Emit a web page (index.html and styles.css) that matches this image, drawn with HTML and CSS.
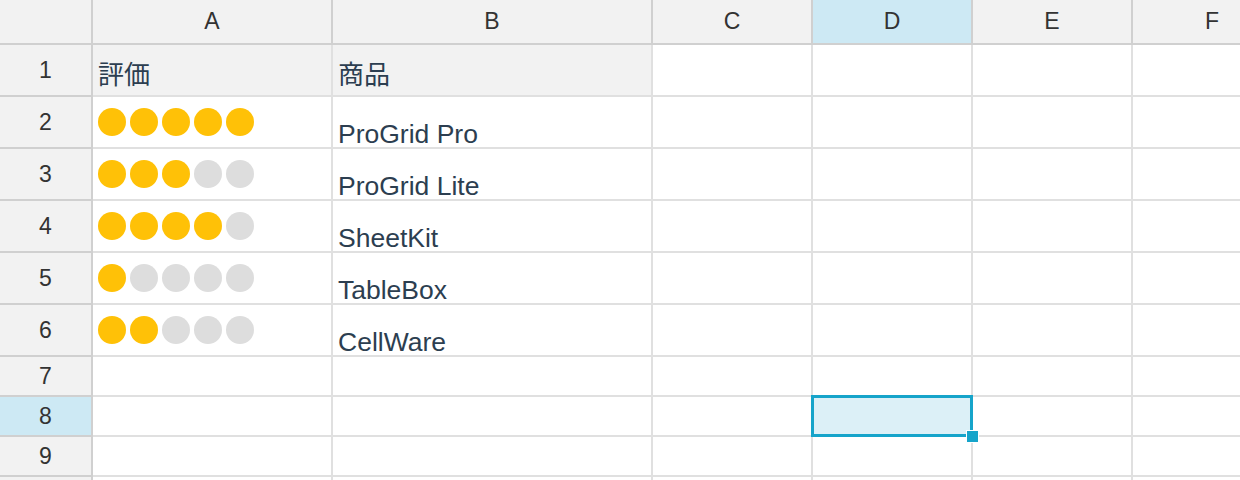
FILE: index.html
```html
<!DOCTYPE html>
<html lang="ja">
<head>
<meta charset="utf-8">
<title>Sheet</title>
<link rel="stylesheet" href="styles.css">
</head>
<body>
<div class="sheet">
  <div class="grid">
    <div class="corner"></div>
    <div class="colhead">A</div>
    <div class="colhead">B</div>
    <div class="colhead">C</div>
    <div class="colhead active">D</div>
    <div class="colhead">E</div>
    <div class="colhead">F</div>

    <div class="rowhead tall">1</div>
    <div class="cell title">評価</div>
    <div class="cell title">商品</div>
    <div class="cell"></div><div class="cell"></div><div class="cell"></div><div class="cell"></div>

    <div class="rowhead tall">2</div>
    <div class="cell rating"><span class="dot on"></span><span class="dot on"></span><span class="dot on"></span><span class="dot on"></span><span class="dot on"></span></div>
    <div class="cell text">ProGrid Pro</div>
    <div class="cell"></div><div class="cell"></div><div class="cell"></div><div class="cell"></div>

    <div class="rowhead tall">3</div>
    <div class="cell rating"><span class="dot on"></span><span class="dot on"></span><span class="dot on"></span><span class="dot"></span><span class="dot"></span></div>
    <div class="cell text">ProGrid Lite</div>
    <div class="cell"></div><div class="cell"></div><div class="cell"></div><div class="cell"></div>

    <div class="rowhead tall">4</div>
    <div class="cell rating"><span class="dot on"></span><span class="dot on"></span><span class="dot on"></span><span class="dot on"></span><span class="dot"></span></div>
    <div class="cell text">SheetKit</div>
    <div class="cell"></div><div class="cell"></div><div class="cell"></div><div class="cell"></div>

    <div class="rowhead tall">5</div>
    <div class="cell rating"><span class="dot on"></span><span class="dot"></span><span class="dot"></span><span class="dot"></span><span class="dot"></span></div>
    <div class="cell text">TableBox</div>
    <div class="cell"></div><div class="cell"></div><div class="cell"></div><div class="cell"></div>

    <div class="rowhead tall">6</div>
    <div class="cell rating"><span class="dot on"></span><span class="dot on"></span><span class="dot"></span><span class="dot"></span><span class="dot"></span></div>
    <div class="cell text">CellWare</div>
    <div class="cell"></div><div class="cell"></div><div class="cell"></div><div class="cell"></div>

    <div class="rowhead">7</div>
    <div class="cell"></div><div class="cell"></div><div class="cell"></div><div class="cell"></div><div class="cell"></div><div class="cell"></div>

    <div class="rowhead active">8</div>
    <div class="cell"></div><div class="cell"></div><div class="cell"></div>
    <div class="cell selected"><span class="sel-box"></span><span class="handle"></span></div>
    <div class="cell"></div><div class="cell"></div>

    <div class="rowhead">9</div>
    <div class="cell"></div><div class="cell"></div><div class="cell"></div><div class="cell"></div><div class="cell"></div><div class="cell"></div>

    <div class="rowhead"></div>
    <div class="cell"></div><div class="cell"></div><div class="cell"></div><div class="cell"></div><div class="cell"></div><div class="cell"></div>
  </div>
</div>
</body>
</html>
```

FILE: styles.css
```css
html, body {
  margin: 0;
  padding: 0;
  background: #ffffff;
  overflow: hidden;
}

.sheet {
  width: 1240px;
  height: 480px;
  overflow: hidden;
}

.grid {
  display: grid;
  grid-template-columns: 93px 240px 320px 160px 160px 160px 160px;
  grid-template-rows: 45px repeat(6, 52px) repeat(4, 40px);
  width: 1293px;
  font-family: "Liberation Sans", "Noto Sans CJK JP", sans-serif;
}

.corner,
.colhead,
.rowhead {
  box-sizing: border-box;
  background: #f2f2f2;
  border-right: 2px solid #d0d0d0;
  border-bottom: 2px solid #d0d0d0;
  color: #333333;
  font-size: 23px;
  display: flex;
  align-items: center;
  justify-content: center;
}

.colhead.active,
.rowhead.active {
  background: #cde9f4;
}

.cell {
  box-sizing: border-box;
  border-right: 2px solid #e0e0e0;
  border-bottom: 2px solid #e0e0e0;
  background: #ffffff;
  color: #2c3e50;
  font-size: 26.5px;
  padding-left: 5px;
  display: flex;
}

.cell.title {
  background: #f2f2f2;
  font-size: 26px;
  align-items: center;
  padding-top: 5px;
}

.cell.text {
  align-items: flex-end;
  line-height: 26px;
}

.cell.rating {
  align-items: center;
  gap: 4px;
}

.dot {
  width: 28px;
  height: 28px;
  border-radius: 50%;
  background: #dddddd;
}

.dot.on {
  background: #ffc107;
}

.cell.selected {
  position: relative;
}

.sel-box {
  position: absolute;
  left: -2px;
  top: -2px;
  right: -2px;
  bottom: -2px;
  border: 3px solid #16a4ca;
  background: #dcf0f7;
  z-index: 2;
}

.handle {
  position: absolute;
  right: -8px;
  bottom: -8px;
  width: 11px;
  height: 11px;
  background: #16a4ca;
  border: 1px solid #ffffff;
  z-index: 3;
}
```
